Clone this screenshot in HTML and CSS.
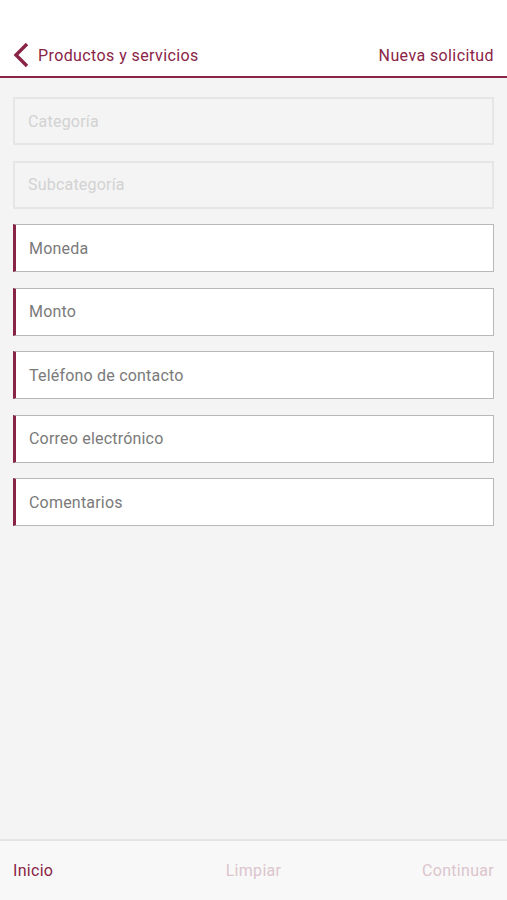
FILE: index.html
```html
<!DOCTYPE html>
<html lang="es">
<head>
    <meta charset="UTF-8">
    <meta name="viewport" content="width=device-width, initial-scale=1.0">
    <title>Nueva solicitud</title>
    <link rel="stylesheet" href="styles.css">
</head>
<body>
    <div class="app">
        <div class="header">
            <a class="back" href="#">
                <svg width="18" height="26" viewBox="0 0 18 26"><path d="M15 2 L4 13 L15 24" fill="none" stroke="#8a2446" stroke-width="3.4"/></svg>
                <span>Productos y servicios</span>
            </a>
            <span class="title">Nueva solicitud</span>
        </div>

        <div class="form">
            <div class="field disabled">Categoría</div>
            <div class="field disabled">Subcategoría</div>
            <div class="field">Moneda</div>
            <div class="field">Monto</div>
            <div class="field">Teléfono de contacto</div>
            <div class="field">Correo electrónico</div>
            <div class="field">Comentarios</div>
        </div>

        <div class="footer">
            <a href="#" class="link">Inicio</a>
            <a href="#" class="link faded center">Limpiar</a>
            <a href="#" class="link faded right">Continuar</a>
        </div>
    </div>
</body>
</html>
```

FILE: styles.css
```css
body {
    margin: 0;
    font-family: Roboto, "Liberation Sans", sans-serif;
    background-color: #f4f4f4;
}
.app {
    display: flex;
    flex-direction: column;
    height: 900px;
}
.header {
    background-color: #fff;
    height: 78px;
    box-sizing: border-box;
    display: flex;
    align-items: center;
    justify-content: space-between;
    padding: 34px 13px 0 12px;
    border-bottom: 2px solid #8a2446;
}
.back {
    display: flex;
    align-items: center;
    gap: 8px;
    color: #8a2446;
    text-decoration: none;
    font-size: 16px;
    letter-spacing: 0.4px;
}
.title {
    color: #8a2446;
    font-size: 16px;
    letter-spacing: 0.4px;
}
.form {
    flex: 1;
    display: flex;
    flex-direction: column;
    gap: 15.5px;
    padding: 19px 13px 0 13px;
}
.field {
    height: 48px;
    box-sizing: border-box;
    background-color: #fff;
    border: 1px solid #b8b8b8;
    border-left: 3px solid #8a2446;
    display: flex;
    align-items: center;
    padding-left: 13px;
    color: #7a7a7a;
    font-size: 16px;
    letter-spacing: 0.2px;
}
.field.disabled {
    background-color: #f4f4f4;
    border: 2px solid #e6e6e6;
    color: #d2d2d2;
}
.footer {
    height: 59px;
    border-top: 2px solid #e4e4e4;
    background-color: #f8f8f8;
    display: grid;
    grid-template-columns: 1fr 1fr 1fr;
    align-items: center;
    padding: 0 13px;
}
.link {
    color: #8a2446;
    text-decoration: none;
    font-size: 16px;
    letter-spacing: 0.3px;
}
.link.faded {
    color: #dcc5cd;
}
.center {
    text-align: center;
}
.right {
    text-align: right;
}
```
